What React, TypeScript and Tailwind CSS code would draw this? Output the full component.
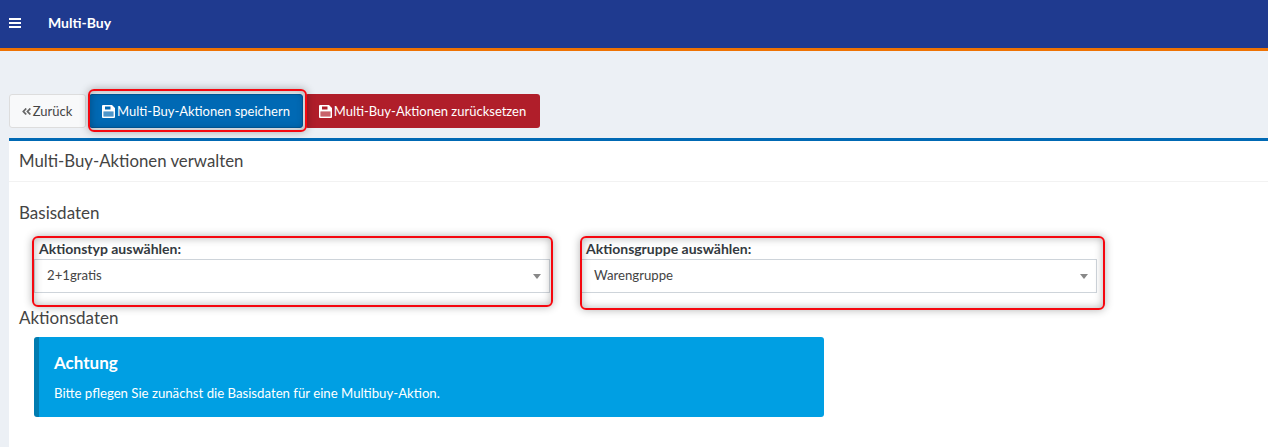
import React from 'react';
import { FaAngleDoubleLeft } from 'react-icons/fa';

const Marker: React.FC<{ className: string }> = ({ className }) => (
  <div
    className={`absolute pointer-events-none rounded-[6px] border-2 border-[#f5070f] shadow-[0_0_8px_rgba(0,0,0,0.3),inset_0_0_8px_rgba(0,0,0,0.3)] ${className}`}
  />
);

const SaveIcon = () => (
  <svg width="13" height="13" viewBox="0 0 13 13" className="mr-[2px] -mt-[2px] shrink-0" fill="currentColor">
    <path
      fillRule="evenodd"
      d="M1 0H10L13 3V12Q13 13 12 13H1Q0 13 0 12V1Q0 0 1 0ZM3 1.5V4.5H8.5V1.5ZM1.5 6.5V11.5H11.5V6.5Z"
    />
    <rect x="1.5" y="6.5" width="10" height="5" opacity="0.3" />
  </svg>
);

const BarsIcon = () => (
  <svg width="12" height="10" viewBox="0 0 12 10" className="ml-[9px]" fill="currentColor">
    <rect width="12" height="2" />
    <rect y="4" width="12" height="2" />
    <rect y="8" width="12" height="2" />
  </svg>
);

const SelectField: React.FC<{ label: string; value: string }> = ({ label, value }) => (
  <div className="w-[516px]">
    <label className="block pl-[5px] h-[22px] leading-[24px] text-[14px] font-bold text-[#343a40]">{label}</label>
    <div className="flex items-center justify-between h-[34px] pl-[12px] pr-[7px] border border-[#ced4da] bg-white">
      <span className="text-[13.2px] text-[#444444]">{value}</span>
      <span className="mr-[1px] w-0 h-0 border-x-[4.5px] border-x-transparent border-t-[5px] border-t-[#888888]" />
    </div>
  </div>
);

export default function App() {
  return (
    <div className="relative h-screen overflow-hidden bg-[#ecf0f5] font-['Lato','Liberation_Sans',sans-serif]">
      <header className="flex items-center h-[51px] pb-[3px] bg-[#1f3a8f] border-b-[3px] border-[#ee7203] text-white box-border">
        <BarsIcon />
        <span className="ml-[27px] text-[14px] font-bold">Multi-Buy</span>
      </header>

      <main className="pl-[9px] pt-[43px]">
        <div className="flex items-center h-[34px] text-[13px]">
          <button className="flex items-center h-[34px] w-[77px] pt-[2px] pr-[2px] justify-center border border-[#dddddd] rounded-[3px] bg-[#f8f9fa] text-[#444444]">
            <FaAngleDoubleLeft className="w-[11px] h-[11px] mr-[1px] -mt-[1px] text-[#666666]" />
            Zurück
          </button>
          <button className="flex items-center justify-center h-[34px] w-[214px] pt-[2px] ml-[3px] rounded-[3px] bg-[#0069b4] border border-[#005a9c] text-white">
            <SaveIcon />
            Multi-Buy-Aktionen speichern
          </button>
          <button className="flex items-center justify-center h-[34px] w-[235px] pt-[2px] ml-[2px] rounded-[3px] bg-[#b01e2a] text-white">
            <SaveIcon />
            Multi-Buy-Aktionen zurücksetzen
          </button>
        </div>

        <section className="mt-[10px] bg-white border-t-[3px] border-[#0069b4] h-[320px]">
          <div className="h-[41px] flex items-center pl-[10px] border-b border-[#f2f2f2] text-[16.8px] text-[#444444]">
            Multi-Buy-Aktionen verwalten
          </div>
          <div className="pl-[10px] pt-[19px] text-[17px] leading-[24px] text-[#444444]">Basisdaten</div>
          <div className="flex gap-[31px] mt-[12px] ml-[25px]">
            <SelectField label="Aktionstyp auswählen:" value="2+1gratis" />
            <SelectField label="Aktionsgruppe auswählen:" value="Warengruppe" />
          </div>
          <div className="pl-[10px] mt-[13px] text-[17px] leading-[24px] text-[#444444]">Aktionsdaten</div>
          <div className="ml-[25px] mt-[7px] w-[790px] h-[80px] rounded-[3px] border-l-[5px] border-[#007cb1] bg-[#009fe3] pl-[15px] pt-[14px] text-white">
            <h5 className="text-[17px] leading-[24px] font-bold">Achtung</h5>
            <p className="mt-[8px] text-[13.2px] leading-[20px]">Bitte pflegen Sie zunächst die Basisdaten für eine Multibuy-Aktion.</p>
          </div>
        </section>
      </main>

      <Marker className="left-[88px] top-[89px] w-[219px] h-[43px]" />
      <Marker className="left-[32px] top-[236px] w-[521px] h-[71px]" />
      <Marker className="left-[580px] top-[236px] w-[525px] h-[74px]" />
    </div>
  );
}
